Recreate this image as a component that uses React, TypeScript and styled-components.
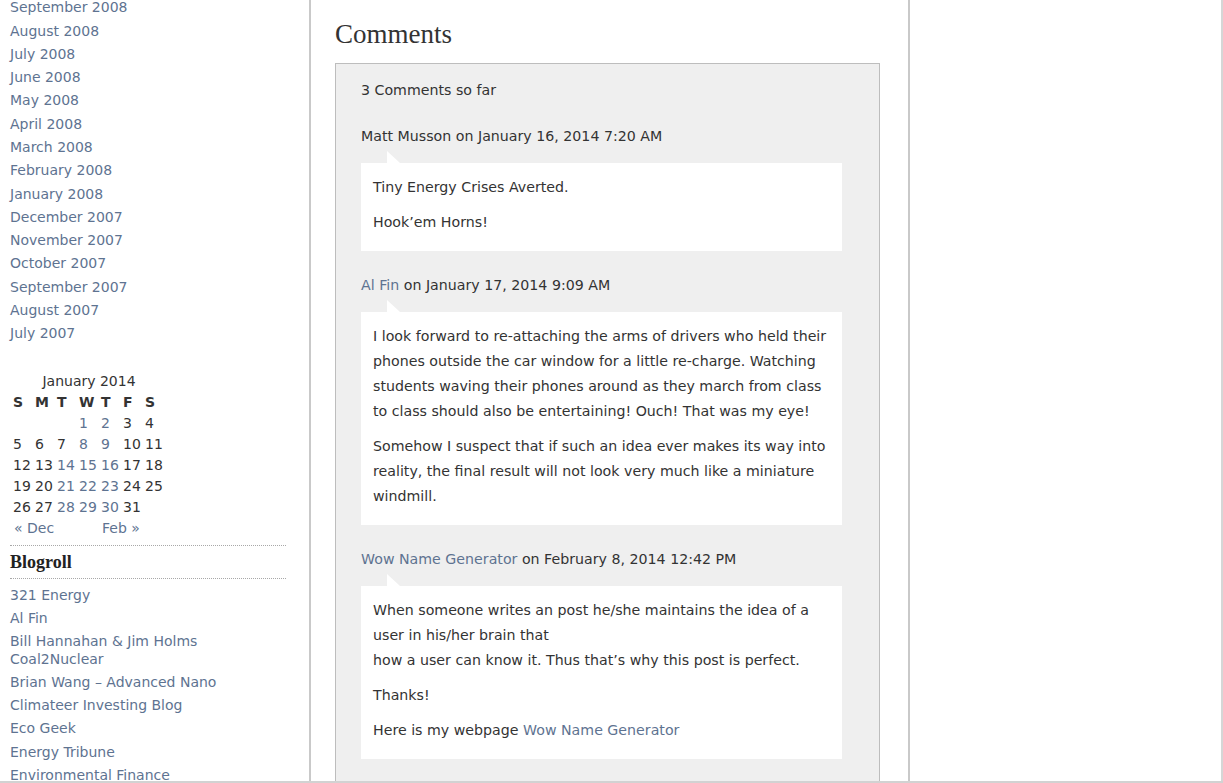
import React from "react";
import styled, { createGlobalStyle } from "styled-components";

const Global = createGlobalStyle`
  html, body { margin: 0; padding: 0; background: #fff; }
  body { font-family: "DejaVu Sans", Verdana, sans-serif; font-size: 14px; color: #333; }
  * { box-sizing: border-box; }
  a { color: #5e7391; text-decoration: none; }
`;

const Page = styled.div`
  display: flex;
  width: 1223px;
  height: 783px;
  overflow: hidden;
  border-bottom: 2px solid #d2d2d2;
`;

const Sidebar = styled.aside`
  width: 311px;
  flex: none;
  padding-left: 10px;
  border-right: 2px solid #c9c9c9;
  overflow: hidden;
`;

const LinkList = styled.ul`
  list-style: none;
  margin: 0;
  padding: 0;
  width: 276px;
`;

const ArchiveList = styled(LinkList)`
  margin-top: -3.8px;
`;

const BlogrollList = styled(LinkList)`
  margin-top: 5px;
`;

const LinkItem = styled.li`
  padding: 3px 0;
  line-height: 17.3px;
`;

const Calendar = styled.table`
  margin: 25px 0 0 2px;
  border-collapse: collapse;
  table-layout: fixed;
  width: 154px;
  caption {
    line-height: 21px;
    text-align: center;
  }
`;

const HeadCell = styled.th`
  width: 22px;
  height: 21px;
  padding: 0 0 0 1px;
  text-align: left;
  font-weight: bold;
  line-height: 21px;
`;

const DayCell = styled.td`
  height: 21px;
  padding: 0 0 0 1px;
  text-align: left;
  line-height: 21px;
  color: ${(p: { $linked?: boolean }) => (p.$linked ? "#5e7391" : "#333")};
`;

const NavCell = styled.td`
  height: 21px;
  padding: 0 0 0 2px;
  line-height: 21px;
`;

const WidgetTitle = styled.h2`
  width: 276px;
  margin: 6px 0 0;
  padding: 0;
  border-top: 1px dotted #a8a8a8;
  border-bottom: 1px dotted #a8a8a8;
  font-family: "Liberation Serif", "Times New Roman", serif;
  font-size: 18px;
  font-weight: bold;
  color: #222;
  line-height: 32px;
  height: 34px;
`;

const Main = styled.main`
  width: 599px;
  flex: none;
  padding: 0 0 0 24px;
  border-right: 2px solid #c9c9c9;
  font-size: 14.2px;
`;

const Heading = styled.h2`
  margin: 0;
  padding-top: 18px;
  font-family: "Liberation Serif", "Times New Roman", serif;
  font-weight: normal;
  font-size: 27px;
  line-height: 32px;
  color: #333;
`;

const CommentBox = styled.section`
  margin-top: 13px;
  width: 545px;
  background: #efefef;
  border: 1px solid #bdbdbd;
  padding: 16px 37px 40px 25px;
`;

const CountLine = styled.div`
  line-height: 20px;
`;

const CommentList = styled.ol`
  list-style: none;
  margin: 0;
  padding: 0;
`;

const Comment = styled.li`
  margin-top: ${(p: { $first?: boolean }) => (p.$first ? "26px" : "24px")};
`;

const Meta = styled.div`
  line-height: 20px;
  margin-bottom: 17px;
`;

const Body = styled.div`
  position: relative;
  background: #fff;
  padding: 12px 12px 6px;
  line-height: 25px;
  &::before {
    content: "";
    position: absolute;
    left: 26px;
    top: -12px;
    width: 0;
    height: 0;
    border-bottom: 12px solid #fff;
    border-right: 13px solid transparent;
  }
  p { margin: 0 0 10px; }
`;

const RightCol = styled.div`
  flex: 1;
  border-right: 2px solid #d6d6d6;
`;

const archives = [
  "September 2008", "August 2008", "July 2008", "June 2008", "May 2008",
  "April 2008", "March 2008", "February 2008", "January 2008", "December 2007",
  "November 2007", "October 2007", "September 2007", "August 2007", "July 2007",
];

const blogroll = [
  "321 Energy", "Al Fin", "Bill Hannahan & Jim Holms Coal2Nuclear",
  "Brian Wang – Advanced Nano", "Climateer Investing Blog", "Eco Geek",
  "Energy Tribune", "Environmental Finance", "Energy Bulletin",
];

const linked = new Set([1, 2, 8, 9, 14, 15, 16, 21, 22, 23, 28, 29, 30]);
const weeks: (number | null)[][] = [
  [null, null, null, 1, 2, 3, 4],
  [5, 6, 7, 8, 9, 10, 11],
  [12, 13, 14, 15, 16, 17, 18],
  [19, 20, 21, 22, 23, 24, 25],
  [26, 27, 28, 29, 30, 31, null],
];

export default function App() {
  return (
    <>
      <Global />
      <Page>
        <Sidebar>
          <ArchiveList>
            {archives.map((a) => (
              <LinkItem key={a}><a href="#">{a}</a></LinkItem>
            ))}
          </ArchiveList>
          <Calendar>
            <caption>January 2014</caption>
            <thead>
              <tr>
                {["S", "M", "T", "W", "T", "F", "S"].map((d, i) => (
                  <HeadCell key={i}>{d}</HeadCell>
                ))}
              </tr>
            </thead>
            <tbody>
              {weeks.map((w, i) => (
                <tr key={i}>
                  {w.map((d, j) => (
                    <DayCell key={j} $linked={d !== null && linked.has(d)}>{d ?? ""}</DayCell>
                  ))}
                </tr>
              ))}
              <tr>
                <NavCell colSpan={3}><a href="#">« Dec</a></NavCell>
                <NavCell />
                <NavCell colSpan={3}><a href="#">Feb »</a></NavCell>
              </tr>
            </tbody>
          </Calendar>
          <WidgetTitle>Blogroll</WidgetTitle>
          <BlogrollList>
            {blogroll.map((b) => (
              <LinkItem key={b}><a href="#">{b}</a></LinkItem>
            ))}
          </BlogrollList>
        </Sidebar>
        <Main>
          <Heading>Comments</Heading>
          <CommentBox>
            <CountLine>3 Comments so far</CountLine>
            <CommentList>
              <Comment $first>
                <Meta>Matt Musson on January 16, 2014 7:20 AM</Meta>
                <Body>
                  <p>Tiny Energy Crises Averted.</p>
                  <p>Hook’em Horns!</p>
                </Body>
              </Comment>
              <Comment>
                <Meta><a href="#">Al Fin</a> on January 17, 2014 9:09 AM</Meta>
                <Body>
                  <p>I look forward to re-attaching the arms of drivers who held their phones outside the car window for a little re-charge. Watching students waving their phones around as they march from class to class should also be entertaining! Ouch! That was my eye!</p>
                  <p>Somehow I suspect that if such an idea ever makes its way into reality, the final result will not look very much like a miniature windmill.</p>
                </Body>
              </Comment>
              <Comment>
                <Meta><a href="#">Wow Name Generator</a> on February 8, 2014 12:42 PM</Meta>
                <Body>
                  <p>When someone writes an post he/she maintains the idea of a user in his/her brain that<br />how a user can know it. Thus that’s why this post is perfect.</p>
                  <p>Thanks!</p>
                  <p>Here is my webpage <a href="#">Wow Name Generator</a></p>
                </Body>
              </Comment>
            </CommentList>
          </CommentBox>
        </Main>
        <RightCol />
      </Page>
    </>
  );
}
